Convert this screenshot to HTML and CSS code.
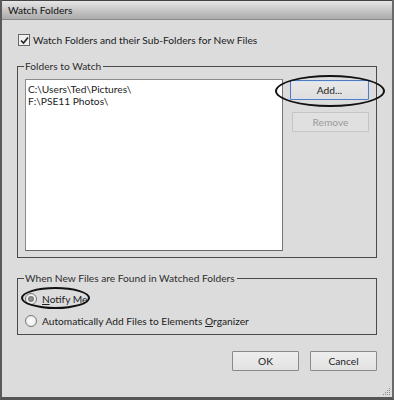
FILE: index.html
```html
<!DOCTYPE html>
<html>
<head>
<meta charset="utf-8">
<link rel="stylesheet" href="styles.css">
</head>
<body>
<div class="window">
  <div class="titlebar">Watch Folders</div>
  <div class="content">
    <label class="check-row">
      <span class="checkbox">
        <svg width="9" height="9" viewBox="0 0 9 9"><path d="M1 4.5 L3.5 7 L8 1.5" fill="none" stroke="#222" stroke-width="1.6"/></svg>
      </span>
      <span class="check-label">Watch Folders and their Sub-Folders for New Files</span>
    </label>

    <section class="group group-folders">
      <div class="group-head">
        <span class="tick"></span>
        <span class="legend">Folders to Watch</span>
        <span class="line"></span>
      </div>
      <div class="group-body folders-inner">
        <div class="listbox">
          <div class="item">C:\Users\Ted\Pictures\</div>
          <div class="item">F:\PSE11 Photos\</div>
        </div>
        <div class="side-buttons">
          <div class="btn-wrap">
            <button class="btn btn-focus">Add...</button>
            <span class="ring ring-add"></span>
          </div>
          <button class="btn btn-disabled">Remove</button>
        </div>
      </div>
    </section>

    <section class="group group-new">
      <div class="group-head">
        <span class="tick"></span>
        <span class="legend">When New Files are Found in Watched Folders</span>
        <span class="line"></span>
      </div>
      <div class="group-body radios">
        <div class="radio-row">
          <span class="radio checked"><span class="dot"></span></span>
          <span><u>N</u>otify Me</span>
          <span class="ring ring-notify"></span>
        </div>
        <div class="radio-row">
          <span class="radio"></span>
          <span>Automatically Add Files to Elements <u>O</u>rganizer</span>
        </div>
      </div>
    </section>

    <div class="footer">
      <button class="btn btn-foot">OK</button>
      <button class="btn btn-foot">Cancel</button>
    </div>
  </div>
  <div class="grip">
    <svg width="8" height="8" viewBox="0 0 8 8">
      <rect x="6" y="0" width="1" height="1" fill="#888"/>
      <rect x="4" y="2" width="1" height="1" fill="#888"/>
      <rect x="6" y="2" width="1" height="1" fill="#888"/>
      <rect x="2" y="4" width="1" height="1" fill="#888"/>
      <rect x="4" y="4" width="1" height="1" fill="#888"/>
      <rect x="6" y="4" width="1" height="1" fill="#888"/>
      <rect x="0" y="6" width="1" height="1" fill="#888"/>
      <rect x="2" y="6" width="1" height="1" fill="#888"/>
      <rect x="4" y="6" width="1" height="1" fill="#888"/>
      <rect x="6" y="6" width="1" height="1" fill="#888"/>
    </svg>
  </div>
</div>
</body>
</html>
```

FILE: styles.css
```css
* { box-sizing: border-box; }
html, body { margin: 0; padding: 0; }
body {
  width: 394px;
  height: 400px;
  overflow: hidden;
  background: #dcdcdc;
  font-family: "Lato", "Noto Sans", sans-serif;
  font-size: 10.2px;
  color: #202020;
}
.window {
  position: relative;
  width: 394px;
  height: 400px;
  border-left: 2px solid #5a5a5a;
  border-right: 2px solid #6a6a6a;
  border-bottom: 3px solid #555;
  background: #dcdcdc;
  display: flex;
  flex-direction: column;
}
.titlebar {
  height: 20px;
  border-top: 1px solid #444;
  border-bottom: 1px solid #8a8a8a;
  background: linear-gradient(#e6e6e6, #c4c4c4 55%, #ababab);
  font-size: 10.2px;
  line-height: 19px;
  padding-left: 6px;
  color: #111;
}
.content {
  flex: 1;
  padding: 13px 15px 0 15px;
  display: flex;
  flex-direction: column;
}
.check-row {
  display: flex;
  align-items: center;
  gap: 3px;
  height: 14px;
  padding-left: 1px;
}
.checkbox {
  width: 12px;
  height: 12px;
  border: 1px solid #666;
  background: #f0f0f0;
  display: flex;
  align-items: center;
  justify-content: center;
}

/* group boxes */
.group { width: 360px; }
.group-head {
  display: flex;
  height: 12px;
}
.tick {
  align-self: flex-end;
  width: 7px;
  height: 6px;
  border-top: 1px solid #4a4a4a;
  border-left: 1px solid #4a4a4a;
}
.legend {
  line-height: 12px;
  padding: 0 2px 0 1px;
  color: #2e2e2e;
}
.line {
  flex: 1;
  align-self: flex-end;
  height: 6px;
  border-top: 1px solid #4a4a4a;
  border-right: 1px solid #4a4a4a;
}
.group-body {
  border: 1px solid #4a4a4a;
  border-top: none;
}

.group-folders { margin-top: 13px; }
.folders-inner {
  display: flex;
  gap: 7px;
  padding: 7px 0 6px 7px;
}
.listbox {
  width: 258px;
  height: 172px;
  background: #fff;
  border: 1px solid #8c8c8c;
  border-right-color: #777;
  border-bottom-color: #666;
  padding: 3px 2px;
}
.item { line-height: 12px; height: 12px; color: #222; }
.side-buttons {
  display: flex;
  flex-direction: column;
  gap: 12px;
  padding-top: 1px;
}
.btn-wrap { position: relative; height: 20px; }
.btn {
  font-family: inherit;
  font-size: 10.2px;
  margin: 0;
  height: 20px;
  width: 79px;
  border: 1px solid #9a9a9a;
  background: linear-gradient(#eeeeee, #e2e2e2);
  color: #222;
  padding: 0;
  border-radius: 1px;
  display: block;
}
.btn-focus {
  border: 1px solid #4f7dc0;
  box-shadow: inset 0 0 0 1px #d6e2f2;
  background: linear-gradient(#e8e8e8, #dedede);
}
.btn-disabled {
  color: #9a9a9a;
  border-color: #c4c4c4;
  background: #e0e0e0;
  width: 77px;
  margin-left: 2px;
}
.ring {
  position: absolute;
  border: 2px solid #111;
  border-radius: 50%;
  pointer-events: none;
}
.ring-add {
  left: -15px;
  top: -5px;
  width: 110px;
  height: 32px;
}

.group-new { margin-top: 14px; }
.radios {
  display: flex;
  flex-direction: column;
  gap: 8px;
  padding: 8px 0 6px 7px;
}
.radio-row {
  position: relative;
  display: flex;
  align-items: center;
  gap: 5px;
  height: 14px;
  color: #222;
}
.radio {
  width: 12px;
  height: 12px;
  border-radius: 50%;
  border: 1px solid #777;
  background: radial-gradient(#ffffff, #e4e4e4);
  display: flex;
  align-items: center;
  justify-content: center;
}
.radio .dot {
  width: 6px;
  height: 6px;
  border-radius: 50%;
  background: radial-gradient(#9a9a9a, #666);
}
.ring-notify {
  left: -4px;
  top: -5px;
  width: 69px;
  height: 22px;
}
.footer {
  display: flex;
  justify-content: flex-end;
  gap: 11px;
  margin-top: 16px;
}
.btn-foot {
  width: 67px;
  height: 20px;
  border-color: #8a8a8a;
}
.grip {
  position: absolute;
  right: 1px;
  bottom: 1px;
  line-height: 0;
}
```
